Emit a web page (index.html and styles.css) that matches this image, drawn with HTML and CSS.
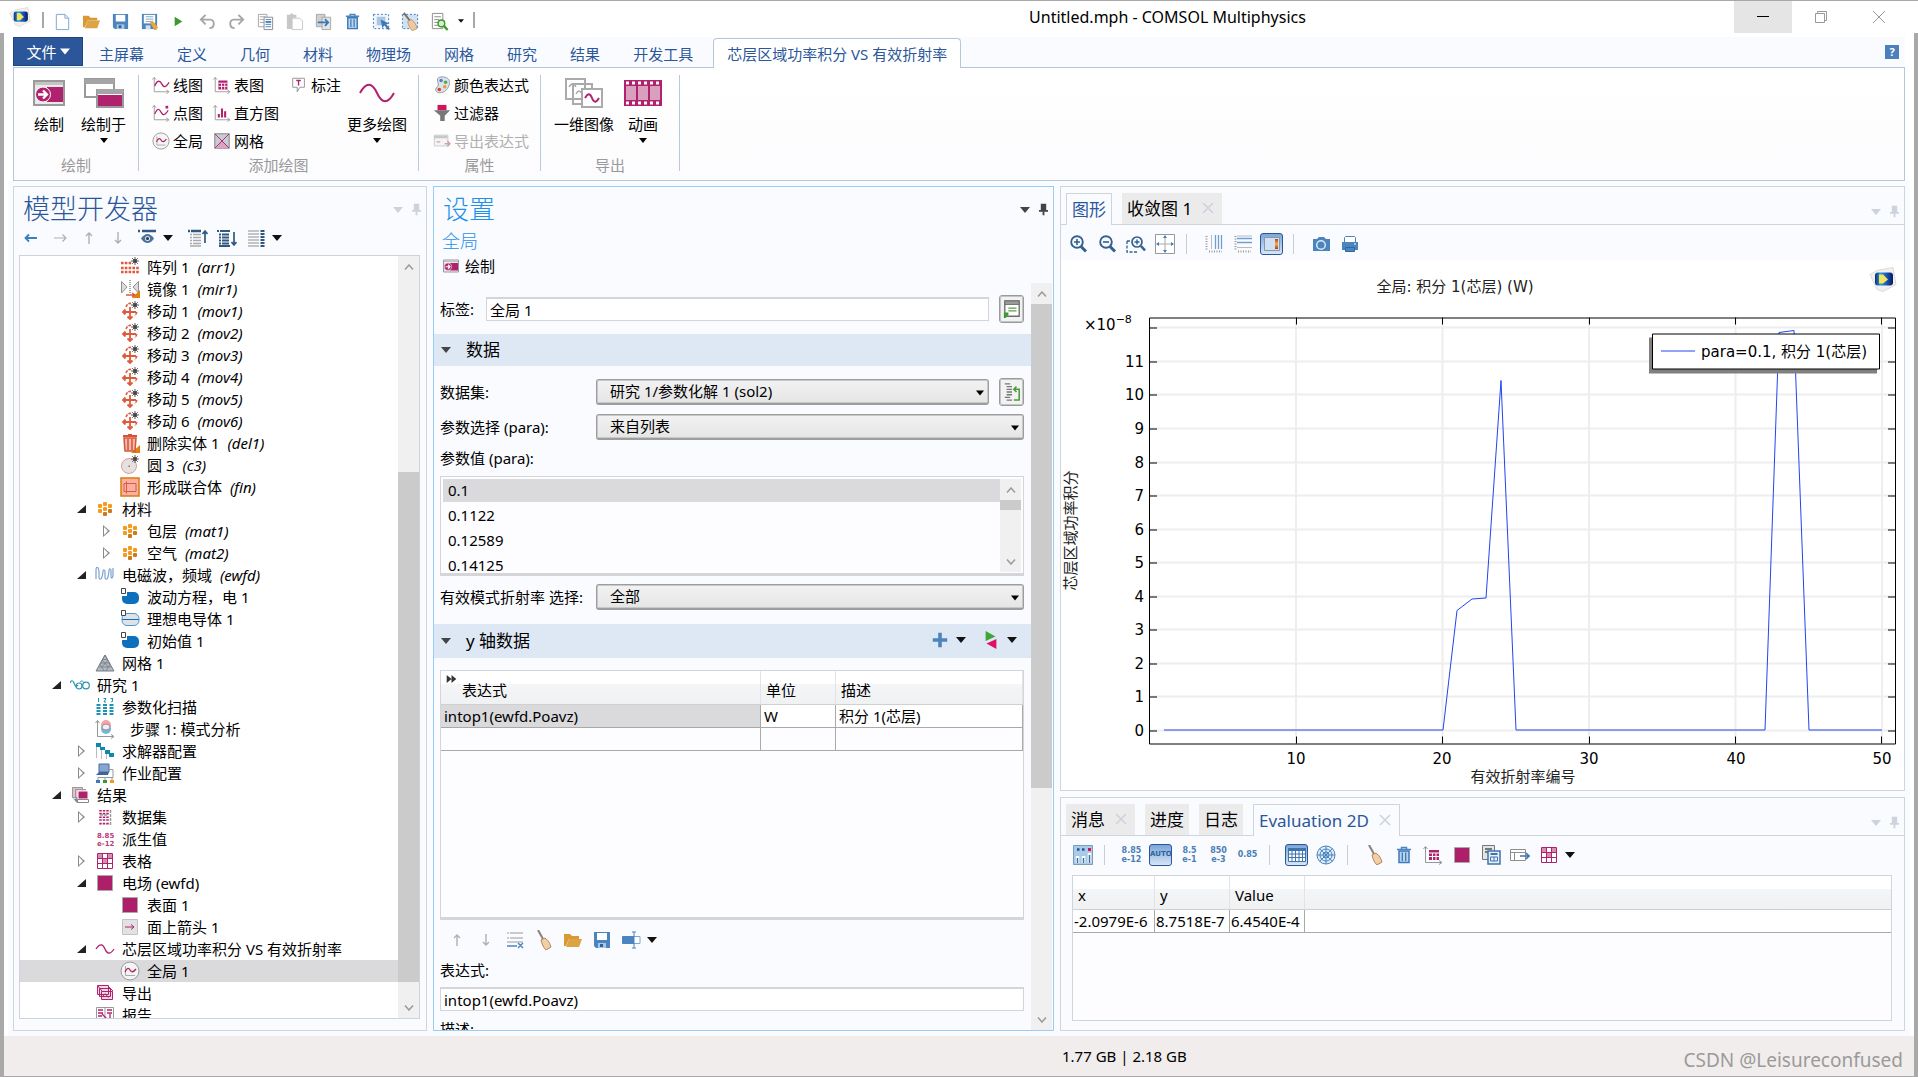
FILE: index.html
```html
<!DOCTYPE html>
<html lang="zh-CN">
<head>
<meta charset="utf-8">
<title>Untitled.mph - COMSOL Multiphysics</title>
<link rel="stylesheet" href="styles.css">
</head>
<body>
<svg class="defs" aria-hidden="true">
  <defs>
    <linearGradient id="logoFill" x1="0" y1="0" x2="1" y2="0"><stop offset="0" stop-color="#0a2a7a"/><stop offset=".3" stop-color="#2a9be0"/><stop offset=".6" stop-color="#1d5fc4"/><stop offset="1" stop-color="#061a60"/></linearGradient>
    <linearGradient id="rainbow" x1="0" y1="0" x2="0" y2="1"><stop offset="0" stop-color="#c33"/><stop offset=".5" stop-color="#f5b63c"/><stop offset="1" stop-color="#a33"/></linearGradient>
    <symbol id="logo" viewBox="0 0 28 26"><path d="M1 8 8 4 24 1l3 17-13 7-6-2z" fill="#f1f0ee" stroke="#dcdad8"/><rect x="6" y="6" width="18" height="13" rx="3" fill="url(#logoFill)"/><path d="M10 8h4l5 5-5 4-4 0z" fill="#f3e45a"/></symbol>
    <symbol id="caret" viewBox="0 0 10 6"><path d="M0 0h10L5 6z" fill="currentColor"/></symbol>
    <symbol id="pin" viewBox="0 0 10 13"><path d="M2 0h6v7h2v2H6v4H4V9H0V7h2z" fill="currentColor"/></symbol>
    <symbol id="chev-up" viewBox="0 0 10 6"><path d="M1 5.500 5 1l4 4.500" fill="none" stroke="#9a9a9a" stroke-width="1.500"/></symbol>
    <symbol id="chev-down" viewBox="0 0 10 6"><path d="M1 .5 5 5 9 .5" fill="none" stroke="#9a9a9a" stroke-width="1.500"/></symbol>
    <symbol id="x" viewBox="0 0 12 12"><path d="M1 1l10 10M11 1 1 11" stroke="currentColor" stroke-width="1.500" fill="none"/></symbol>
    <symbol id="new" viewBox="0 0 20 20"><path d="M3.500 2.500h9l4 4v12h-13z" fill="#fff" stroke="#7ba7d3"/><path d="M12.500 2.500v4h4" fill="none" stroke="#7ba7d3"/></symbol>
    <symbol id="open" viewBox="0 0 20 20"><path d="M1 4h6l2 2h7v3H6L3 16H1z" fill="#d99a35"/><path d="M6 9h13l-3 8H3z" fill="#dca445"/></symbol>
    <symbol id="save" viewBox="0 0 20 20"><path d="M2 2h16v16H4l-2-2z" fill="#4c84be"/><path d="M5 3h10v7H5z" fill="#fff"/><path d="M6 13h8v5H6z" fill="#a8c6e6"/><path d="M8 14h3v3H8z" fill="#2d629d"/></symbol>
    <symbol id="saveas" viewBox="0 0 20 20"><path d="M2 2h16v16H2z" fill="#4c84be"/><path d="M4 3h12v9H4z" fill="#fff"/><path d="M6 5h8M6 7.500h8M6 10h6" stroke="#7ba7d3"/><path d="M6 14h5v4H6z" fill="#cfe0f2"/><path d="m10 10 3-1 6 7-2 3-2 0z" fill="#e6a73c"/></symbol>
    <symbol id="run" viewBox="0 0 20 20"><path d="m6 5 8 5-8 5z" fill="#3b9a2c"/></symbol>
    <symbol id="undo" viewBox="0 0 20 20"><path d="M4 8h9c5 0 5 9-1 9M8 3 3 8l5 5" fill="none" stroke="#a6a6a6" stroke-width="2"/></symbol>
    <symbol id="redo" viewBox="0 0 20 20"><path d="M16 8H7c-5 0-5 9 1 9M12 3l5 5-5 5" fill="none" stroke="#a6a6a6" stroke-width="2"/></symbol>
    <symbol id="copy" viewBox="0 0 20 20"><path d="M2.500 2.500h9v13h-9z" fill="#fff" stroke="#a6a6a6"/><path d="M4 5h6M4 8h6M4 11h6" stroke="#a6a6a6"/><path d="M8.500 5.500h9v13h-9z" fill="#fff" stroke="#8b8b8b"/><path d="M10 8h6M10 13h6M10 15.500h6" stroke="#4c84be"/><path d="M10 9.500h6v2h-6z" fill="#4c84be"/></symbol>
    <symbol id="paste" viewBox="0 0 20 20"><path d="M2 3h3l2-2 2 2h3v3H8v12H2z" fill="#c7c7c7"/><path d="M7.500 6.500h8l3 3v9h-11z" fill="#fff" stroke="#c7c7c7"/></symbol>
    <symbol id="dup" viewBox="0 0 20 20"><path d="M2.500 2.500h9v13h-9z" fill="#d0d0d0" stroke="#a6a6a6"/><path d="M8.500 5.500h9v13h-9z" fill="#e4e4e4" stroke="#a6a6a6"/><path d="M4 11h11M11.500 7.500 15 11l-3.500 3.500" fill="none" stroke="#3676b8" stroke-width="1.800"/></symbol>
    <symbol id="trash" viewBox="0 0 20 20"><path d="M3 4.500h14M7.500 4V2.500h5V4" fill="none" stroke="#4c84be" stroke-width="1.500"/><path d="M5 6h10v11.500H5z" fill="#b9d4ef" stroke="#3e79b6" stroke-width="1.500"/><path d="M8.300 7.500V16M11.700 7.500V16" stroke="#3e79b6" stroke-width="1.300"/></symbol>
    <symbol id="selbox" viewBox="0 0 20 20"><path d="M1.500 2.500h16v15h-16z" fill="#eef5fc" stroke="#3e79b6" stroke-dasharray="2 2"/><path d="M5 5h9v9H5z" fill="#a9c7e5"/><path d="m9 8 9 4-3 1 4 5-2 1-4-5-2 3z" fill="#3e79b6"/></symbol>
    <symbol id="selclear" viewBox="0 0 20 20"><path d="M1.500 2.500h16v15h-16z" fill="#cfe1f3" stroke="#3e79b6" stroke-dasharray="2 2"/><path d="m3 1 7 9" stroke="#7c6e63" stroke-width="2"/><path d="m7 10 4-2c4 3 5 6 6 9l-5 3c-3-3-4-6-5-10z" fill="#ecc9a0" stroke="#b28456" stroke-width=".7"/></symbol>
    <symbol id="find" viewBox="0 0 20 20"><path d="M2.500 1.500h11v16h-11z" fill="#fff" stroke="#8b8b8b"/><path d="M4.500 5h7M4.500 8h5M4.500 11h4M4.500 14h4" stroke="#8b8b8b"/><circle cx="12" cy="12" r="3.500" fill="#d3edcd" stroke="#3b9a2c" stroke-width="1.500"/><path d="m14.500 14.500 4 4.500" stroke="#3b9a2c" stroke-width="2.500"/></symbol>
    <symbol id="left" viewBox="0 0 20 20"><path d="M4 10h12M8 6.500 4.500 10 8 13.500" fill="none" stroke="currentColor" stroke-width="1.800"/></symbol>
    <symbol id="right" viewBox="0 0 20 20"><path d="M4 10h12M12.500 6.500 16 10l-3.500 3.500" fill="none" stroke="currentColor" stroke-width="1.200"/></symbol>
    <symbol id="up" viewBox="0 0 20 20"><path d="M10 16V5M7 8l3-3 3 3" fill="none" stroke="currentColor" stroke-width="1.400"/></symbol>
    <symbol id="down" viewBox="0 0 20 20"><path d="M10 4v11M7 12l3 3 3-3" fill="none" stroke="currentColor" stroke-width="1.400"/></symbol>
    <symbol id="eye" viewBox="0 0 20 20"><path d="M1 3h2M5 3h14" stroke="#33587f" stroke-width="2.500"/><path d="M4 10.500c4-6 9-6 13 0-4 6-9 6-13 0z" fill="#4b719c"/><circle cx="10.500" cy="10.500" r="2.500" fill="#dfe8f2"/><circle cx="10.500" cy="10.500" r="1.500" fill="#234"/></symbol>
    <symbol id="collapse" viewBox="0 0 20 20"><path d="M0 3h2M3 3h10" stroke="#33587f" stroke-width="2.500"/><path d="M2 6.500h2m1 0h8M2 9.500h2m1 0h8M2 12.500h2m1 0h8M2 15.500h2m1 0h8M2 18h11" stroke="#aaa" stroke-width="1.300"/><path d="M17 15V3m-2.500 3L17 3l2.500 3" fill="none" stroke="#33587f" stroke-width="1.700"/></symbol>
    <symbol id="expand" viewBox="0 0 20 20"><path d="M0 3h2M3 3h10M2 6.500h2m1 0h7M2 9.500h2m1 0h7M2 12.500h2m1 0h7M2 15.500h2m1 0h7M2 18h11" stroke="#33587f" stroke-width="2"/><path d="M17 4v13m-2.500-3L17 17l2.500-3" fill="none" stroke="#33587f" stroke-width="1.700"/></symbol>
    <symbol id="columns" viewBox="0 0 20 20"><path d="M2 3h11M2 6h11M2 9h11M2 12h11M2 15h11M2 18h11" stroke="#b4b4b4" stroke-width="1.600"/><path d="M14.500 3h4M14.500 6h4M14.500 9h4M14.500 12h4M14.500 15h4M14.500 18h4" stroke="#33587f" stroke-width="2"/></symbol>
    <symbol id="plotwin" viewBox="0 0 32 26"><path d="M1 1h30v24H1z" fill="#e9e9e9" stroke="#9a9a9a" stroke-width="2"/><path d="M2 2h28v3H2z" fill="#c4c4c4"/><path d="M14 7h16v15H14z" fill="#b0226d"/><circle cx="10" cy="14.500" r="7.500" fill="#b0226d" stroke="#fff"/><path d="M5 14.500h8m-3-4 4 4-4 4" fill="none" stroke="#fff" stroke-width="2.300"/></symbol>
    <symbol id="plotin" viewBox="0 0 40 30"><path d="M1 1h29v18H1z" fill="#fff" stroke="#9a9a9a" stroke-width="2"/><path d="M1 1h29v5H1z" fill="#a5a5a5"/><path d="M13 12h26v17H13z" fill="#b0226d" stroke="#9a9a9a" stroke-width="2"/><path d="M13 11h26v5H13z" fill="#a5a5a5"/><path d="M14 16.500h24" stroke="#fff"/></symbol>
    <symbol id="line" viewBox="0 0 20 20"><path d="M2.500 2v15.500H18M.5 4l2-2.500 2 2.500M16 15.500l3 2-3 2" fill="none" stroke="#979797"/><path d="M3 11c3-7 6-6 8-2s4 4 8-2" fill="none" stroke="#b0226d" stroke-width="1.500"/></symbol>
    <symbol id="point" viewBox="0 0 20 20"><path d="M2.500 2v15.500H18M.5 4l2-2.500 2 2.500M16 15.500l3 2-3 2" fill="none" stroke="#979797"/><path d="M3 11c3-7 5-6 7-2s4 4 8-2" fill="none" stroke="#b0226d" stroke-width="1.400"/><path d="M15 2h3v3h-3z" fill="#b0226d"/></symbol>
    <symbol id="global" viewBox="0 0 20 20"><circle cx="10" cy="10" r="9" fill="#f4f4f4" stroke="#999"/><path d="M5.500 5v9.500H15" fill="none" stroke="#aaa"/><path d="M5 11c2-5 4-4 5-2s3 3 6-1" fill="none" stroke="#b0226d" stroke-width="1.300"/></symbol>
    <symbol id="tableplot" viewBox="0 0 20 20"><path d="M2.500 2v15.500H18M.5 4l2-2.500 2 2.500M16 15.500l3 2-3 2" fill="none" stroke="#979797"/><path d="M6 5h10v10H6z" fill="#b0226d"/><path d="M6 8h10M6 11.500h10M9.500 8v7M13 8v7" stroke="#fff"/></symbol>
    <symbol id="hist" viewBox="0 0 20 20"><path d="M2.500 2v15.500H18M.5 4l2-2.500 2 2.500M16 15.500l3 2-3 2" fill="none" stroke="#979797"/><path d="M6.500 15v-4M10 15V5M13.500 15V8" stroke="#b0226d" stroke-width="2.300"/></symbol>
    <symbol id="meshplot" viewBox="0 0 20 20"><path d="M2 2h16v16H2z" fill="#c8ccd3" stroke="#777"/><path d="m2 18 8-9 8 9z" fill="#d8a4bf"/><path d="M2 2l16 16M18 2 2 18" stroke="#b0226d"/></symbol>
    <symbol id="annot" viewBox="0 0 20 20"><path d="M3 2.500h13v10h-5l-3 5v-5H3z" fill="#fff" stroke="#8f8f8f"/><path d="M7 5h5M9.500 5v5.500" stroke="#b0226d" stroke-width="1.500"/></symbol>
    <symbol id="wave" viewBox="0 0 36 20"><path d="M1 10C7-1 13-1 18 10s11 11 17 0" fill="none" stroke="#b0226d" stroke-width="2"/></symbol>
    <symbol id="palette" viewBox="0 0 20 20"><path d="M10 1c11 0 9 9 6 13-4 6-13 6-13 1 0-3 3-2 3-5S2 1 10 1z" fill="#dbe3ec" stroke="#8a9099"/><circle cx="9" cy="5" r="2" fill="#4c84be"/><circle cx="14" cy="7" r="2" fill="#5aa84a"/><circle cx="13" cy="12" r="2" fill="#f0a030"/><circle cx="7" cy="15" r="2" fill="#d04040"/></symbol>
    <symbol id="filter" viewBox="0 0 20 20"><path d="M5 1h10v6H5z" fill="#d11460"/><path d="M1 7h18l-6 6v6H8v-6z" fill="#777"/></symbol>
    <symbol id="exportx" viewBox="0 0 20 20"><path d="M1.500 3.500h15v12h-15z" fill="#f4f4f4" stroke="#c8c8c8"/><path d="M1 4h15v3H1z" fill="#c8c8c8"/><path d="M4 11h4M13 13h6M16 10l3 3-3 3" stroke="#cf9db7" fill="none" stroke-width="1.500"/></symbol>
    <symbol id="image1d" viewBox="0 0 38 30"><path d="M1 1h19v20H1zM8 6h19v20H8z" fill="#fff" stroke="#aaa" stroke-width="2"/><path d="M4 9c2-4 5-4 7 0M11 16c2-4 4-4 6 0" fill="none" stroke="#aaa" stroke-width="1.500"/><path d="M17 11h20v18H17z" fill="#fff" stroke="#aaa" stroke-width="2"/><path d="M20 20c3-5 5-5 7 0s4 5 7 0" fill="none" stroke="#b0226d" stroke-width="2"/></symbol>
    <symbol id="film" viewBox="0 0 38 26"><path d="M0 0h38v26H0z" fill="#b0226d"/><path d="M2 6h10v14H2zM14 6h10v14H14zM26 6h10v14H26z" fill="#d8a0bd"/><path d="M2 3h34M2 23h34" stroke="#fff" stroke-width="3" stroke-dasharray="3 3"/></symbol>
    <symbol id="star" viewBox="0 0 10 10"><path d="M5 0v10M0 5h10M1.500 1.500l7 7M8.500 1.500l-7 7" stroke="#555" stroke-width="1.200"/><circle cx="5" cy="5" r="2.400" fill="#444"/></symbol>
    <symbol id="array" viewBox="0 0 20 20"><path d="M1 6h11M1 11h18M1 15h18" stroke="#dd5a3c" stroke-width="2.600" stroke-dasharray="2.600 1.200"/><use href="#star" x="11" y="0" width="8" height="8"/></symbol>
    <symbol id="mirror" viewBox="0 0 20 20"><path d="M1.500 2.500 7 8l-5.500 6zM18.500 2.500 13 8l5.500 6z" fill="#ddd" stroke="#8f8f8f"/><path d="M10 1v14" stroke="#555" stroke-dasharray="1 1"/><path d="M20 11v8h-8z" fill="#e08010"/><path d="M6 16h9m-3-2 3 2-3 2" fill="none" stroke="#dd5a3c" stroke-width="1.300"/></symbol>
    <symbol id="move" viewBox="0 0 20 20"><path d="M10 6v12M4 11h12M7.500 15.500 10 18l2.500-2.500M5.500 8.500 3 11l2.500 2.500" fill="none" stroke="#dd5a3c" stroke-width="1.800"/><path d="M6 6c1-3 3-4 5-3.500M17 11l-2 4" fill="none" stroke="#dd5a3c" stroke-width="1.500" stroke-dasharray="3 1"/><use href="#star" x="11" y="0" width="8" height="8"/></symbol>
    <symbol id="delent" viewBox="0 0 20 20"><path d="M20 12v8h-9z" fill="#e08010"/><path d="M3 3h14M8 2h4" stroke="#d4553a" stroke-width="1.800"/><path d="M4 5h12l-1 13H5z" fill="#f6b9ab" stroke="#d4553a" stroke-width="1.500"/><path d="M8 6v11M12 6v11" stroke="#d4553a" stroke-width="1.500"/></symbol>
    <symbol id="circ" viewBox="0 0 20 20"><circle cx="9" cy="11" r="7.500" fill="#e2e2e2" stroke="#e59c8c"/><path d="M8.500 10.500h1.500v1.500H8.500z" fill="#d4553a"/><use href="#star" x="11" y="0" width="8" height="8"/></symbol>
    <symbol id="union" viewBox="0 0 20 20"><path d="M1 1h18v18H1z" fill="#f7b0a2" stroke="#dc7b0c" stroke-width="1.500"/><path d="M4 6.500h12v8H4zM6.500 4.500v12" fill="none" stroke="#dd5a3c"/></symbol>
    <symbol id="mat" viewBox="0 0 20 20"><g fill="#f59a1e"><rect x="8" y="3" width="4" height="4" rx="1"/><rect x="8" y="8" width="4" height="4" rx="1"/><rect x="8" y="13" width="4" height="4" rx="1" fill="#cd7a18"/><rect x="3" y="5" width="4" height="4" rx="1"/><rect x="3" y="10" width="4" height="4" rx="1"/><rect x="13" y="5" width="4" height="4" rx="1"/><rect x="13" y="10" width="4" height="4" rx="1" fill="#cd7a18"/></g></symbol>
    <symbol id="emw" viewBox="0 0 20 20"><path d="M1 14V6c0-5 2-5 3 0v6c0 3 2 3 3 0l1-5c0-3 2-3 2 0v5c0 3 2 3 3 0l1-6c0-3 2-3 2 0v5c0 3 1 3 2 0V3" fill="none" stroke="#7aa2cd" stroke-width="1.200"/></symbol>
    <symbol id="dom" viewBox="0 0 20 20"><rect x="2" y="5" width="17" height="12" rx="5" fill="#0d70bd"/><path d="M1 4h6v5H1z" fill="#fff"/><path d="M1.500 1.500h4v5h-4z" fill="#fff" stroke="#444"/></symbol>
    <symbol id="pec" viewBox="0 0 20 20"><rect x="2" y="4.500" width="17" height="12" rx="5" fill="#dfe3e8" stroke="#4d97d0"/><path d="M2 10.500h17" stroke="#0d70bd"/><path d="M1.500 1.500h4v5h-4z" fill="#fff" stroke="#444"/></symbol>
    <symbol id="mesh" viewBox="0 0 20 20"><path d="M10 2 1 18h18z" fill="#b5bac1" stroke="#777d85"/><path d="M7.500 6.500h5M5.500 10h9M3.500 14h13M10 2l5 9-4 7M10 2 5 11l4 7M7 7l6 7M13 7l-6 7" fill="none" stroke="#777d85" stroke-width=".8"/></symbol>
    <symbol id="study" viewBox="0 0 20 20"><path d="M0 8c1-3 3-3 4 0s2 4 4 2" fill="none" stroke="#2a93ad" stroke-width="1.200"/><circle cx="9" cy="11" r="3" fill="none" stroke="#2a93ad" stroke-width="1.200"/><circle cx="16" cy="10.500" r="3.300" fill="none" stroke="#2a93ad" stroke-width="1.200"/><path d="M10 7c2-2 3-1 4 1" fill="none" stroke="#2a93ad"/></symbol>
    <symbol id="sweep" viewBox="0 0 20 20"><path d="M3.500 7v12M10 7v12M16.500 7v12" stroke="#1d93b5" stroke-width="4" stroke-dasharray="2 1"/><path d="M3.500 1v4M8.500 1.500h2.500L9 5h2M15.500 1.500H18l-1 1.500 1 1-2 1" fill="none" stroke="#1d93b5"/></symbol>
    <symbol id="mode" viewBox="0 0 20 20"><path d="M2.500 2v15.500H18M.5 4l2-2.500 2 2.500M16 15.500l3 2-3 2" fill="none" stroke="#979797"/><circle cx="11" cy="6" r="5" fill="#f2a5a5"/><circle cx="11" cy="10" r="5" fill="#6fb8dd"/><ellipse cx="11" cy="8" rx="4" ry="3" fill="#eef" stroke="#a88"/></symbol>
    <symbol id="solver" viewBox="0 0 20 20"><path d="M1.500 3v14M6.500 8v10M11.500 11v7" stroke="#bbb"/><path d="M1 2h5v4H1zM5 6h5v3H5zM10 9h5v4h-5zM14 12h5v4h-5z" fill="#1088ad"/></symbol>
    <symbol id="job" viewBox="0 0 20 20"><path d="M4 1h10v8H4z" fill="#8aa5cd" stroke="#4a6da5"/><path d="m1 12 3-3h10l-1 3z" fill="#3f659e"/><path d="M14 6.500h4v8H3v3M10 14v3M17 14v3" fill="none" stroke="#999"/><path d="M1 17h4v3H1z" fill="#3b78bd"/><path d="M8 17h4v3H8z" fill="#3b9a2c"/><path d="M15 17h4v3h-4z" fill="#f59a1e"/></symbol>
    <symbol id="results" viewBox="0 0 20 20"><path d="M2.500 2.500h10v10h-10zM5.500 4.500h10v9h-10z" fill="#e6bcd1" stroke="#999"/><path d="M8 6h10v8H8z" fill="#b0226d" stroke="#fff"/><path d="M0 10l4 4h14v4H7z" fill="#888"/><path d="M7.500 14.500h11v3h-11z" fill="#fff" stroke="#888"/></symbol>
    <symbol id="dataset" viewBox="0 0 20 20"><path d="M5.500 3v15M9 3v15M12.500 3v15" stroke="#b0226d" stroke-width="2.500" stroke-dasharray="1.600 1.200 1.600 2"/><path d="M15.500 3v15M5 8h8" stroke="#999" stroke-width="1.500" stroke-dasharray="3 1"/></symbol>
    <symbol id="grid" viewBox="0 0 20 20"><path d="M2.500 2.500h15v15h-15z" fill="#fff" stroke="#b0226d"/><path d="M3 3h5v5H3zM8 8h5v5H8zM13 3h4v5h-4z" fill="#d58fb1"/><path d="M2.500 7.500h15M2.500 12.500h15M7.500 2.500v15M12.500 2.500v15" stroke="#b0226d"/></symbol>
    <symbol id="square" viewBox="0 0 20 20"><path d="M2.500 2.500h15v15h-15z" fill="#ad2069" stroke="#a9a9a9"/></symbol>
    <symbol id="arrowsurf" viewBox="0 0 20 20"><path d="M2.500 2.500h15v15h-15z" fill="#e2e2e2" stroke="#c3c3c3"/><path d="M5 10h9m-3-2.500 3 2.500-3 2.500" fill="none" stroke="#b0226d"/></symbol>
    <symbol id="wave1" viewBox="0 0 20 20"><path d="M1 10c4-6 7-5 9 0s5 6 9 0" fill="none" stroke="#b0226d" stroke-width="1.300"/></symbol>
    <symbol id="export" viewBox="0 0 20 20"><path d="M2.500 2.500h11v9h-11zM4.500 5.500h11v8h-11zM6.500 8.500h11v8h-11z" fill="#f3d9e6" stroke="#b0226d"/><path d="M3 3l4 5M13 3l5 5M8 13c2-3 3-2 4 0s2 1 4-1" fill="none" stroke="#b0226d"/></symbol>
    <symbol id="report" viewBox="0 0 20 20"><path d="M1.500 2.500h17v17h-17zM10 2.500v17" fill="#fff" stroke="#999"/><path d="M3 5h5M3 8h5M3 11h4M12 5h5M12 8h5M7 9l6 6M15 9v8" stroke="#b0226d" stroke-width="1.300"/></symbol>
    <symbol id="derived" viewBox="0 0 20 20"><g fill="#bb3c7c" font-family="DejaVu Sans" font-weight="700" font-size="7"><text x="2" y="9">8.85</text><text x="2" y="17">e-12</text></g></symbol>
    <symbol id="showhelp" viewBox="0 0 20 22"><path d="M2 2h16v17H2z" fill="#fff" stroke="#6d6d6d" stroke-width="1.500"/><path d="M2 2h16v4H2z" fill="#999" stroke="#6d6d6d"/><path d="M6 10h9M6 13h9" stroke="#55a046" stroke-width="1.500"/><path d="M1 21v-6h5v2l-3 4z" fill="#3b9a2c"/></symbol>
    <symbol id="goto" viewBox="0 0 20 22"><path d="M2 2h6M4 5h6M4 8h6M4 11h6M4 14h6M2 17h6M4 20h6" stroke="#777" stroke-width="1.500"/><path d="M12 20h6V8h-6m3-3-3 3 3 3" fill="none" stroke="#4a9a3c" stroke-width="1.700"/></symbol>
    <symbol id="plus" viewBox="0 0 20 20"><path d="M10 2v16M2 10h16" stroke="#4c84be" stroke-width="4"/></symbol>
    <symbol id="swap" viewBox="0 0 20 20"><path d="M4 0l11 6-11 5z" fill="#3fa535"/><path d="M16 9v11L5 14z" fill="#e0106a"/></symbol>
    <symbol id="ff" viewBox="0 0 12 10"><path d="m0 0 6 5-6 5zM6 0l6 5-6 5z" fill="#333"/></symbol>
    <symbol id="rows-x" viewBox="0 0 20 20"><path d="M2 3h2m1 0h13M2 8h2m1 0h13M2 12h16" stroke="#9a9a9a" stroke-width="1.200"/><path d="M2 16h10M13 13l5 5M18 13l-5 5" stroke="#4c84be" stroke-width="1.400"/></symbol>
    <symbol id="broom" viewBox="0 0 20 20"><path d="m4 0 5 9" stroke="#8a8078" stroke-width="2"/><path d="m7 10 4-2c4 3 5 6 6 9l-5 3c-3-3-4-6-5-10z" fill="#f1cfa6" stroke="#b28456"/></symbol>
    <symbol id="edit" viewBox="0 0 20 20"><path d="M1.500 6.500h13v7h-13z" fill="#4c84be" stroke="#4c84be"/><path d="M13 6.500h6v7h-6" fill="#fff" stroke="#7ba7d3"/><path d="M11 2h4M11 18h4M13 2v16" stroke="#4c84be"/></symbol>
    <symbol id="zoomin" viewBox="0 0 20 20"><circle cx="9" cy="8" r="5.800" fill="#f6f9fd" stroke="#345f8e" stroke-width="1.900"/><path d="m13 12.500 5 5" stroke="#345f8e" stroke-width="3"/><path d="M6 8h6M9 5v6" stroke="#345f8e" stroke-width="1.600"/></symbol>
    <symbol id="zoomout" viewBox="0 0 20 20"><circle cx="9" cy="8" r="5.800" fill="#f6f9fd" stroke="#345f8e" stroke-width="1.900"/><path d="m13 12.500 5 5" stroke="#345f8e" stroke-width="3"/><path d="M6 8h6" stroke="#345f8e" stroke-width="1.600"/></symbol>
    <symbol id="zoombox" viewBox="0 0 20 20"><path d="M1 7v11h10M1 7h4" fill="none" stroke="#345f8e" stroke-width="1.300" stroke-dasharray="3 1.500"/><circle cx="11" cy="8" r="5" fill="#f6f9fd" stroke="#345f8e" stroke-width="1.700"/><path d="m15 12 4 4.500" stroke="#345f8e" stroke-width="2.600"/><path d="M8.500 8h5M11 5.500v5" stroke="#345f8e" stroke-width="1.400"/></symbol>
    <symbol id="extents" viewBox="0 0 20 20"><path d="M.5.5h19v19H.5z" fill="#fff" stroke="#999"/><path d="M10 2v16M2 10h16" stroke="#aaa"/><path d="m8 4 2-3 2 3zM8 16l2 3 2-3zM4 8l-3 2 3 2zM16 8l3 2-3 2z" fill="#3c7fc0"/></symbol>
    <symbol id="xlog" viewBox="0 0 20 20"><path d="M2.500 2v14M5 17.500h13" stroke="#999" stroke-width="2" stroke-dasharray="1 1.500" fill="none"/><path d="M7.500 1v14" stroke="#bbb"/><path d="M11.500 1v14M14.500 1v14M17.500 1v14" stroke="#6f9fd0" stroke-width="1.300"/></symbol>
    <symbol id="ylog" viewBox="0 0 20 20"><path d="M2.500 2v14M5 17.500h13" stroke="#999" stroke-width="2" stroke-dasharray="1 1.500" fill="none"/><path d="M4 2h15M4 13.500h15" stroke="#bbb"/><path d="M4 4.500h15M4 8.500h15" stroke="#6f9fd0" stroke-width="1.500"/></symbol>
    <symbol id="legend" viewBox="0 0 20 20"><path d="M2.500 3.500h15v13h-15z" fill="#cfe1f5" stroke="#8c97a5"/><path d="M13 5h3v10h-3z" fill="url(#rainbow)"/></symbol>
    <symbol id="camera" viewBox="0 0 20 20"><path d="M2 5h4l2-2h5l2 2h4v12H2z" fill="#4c84be"/><circle cx="10" cy="11" r="4.300" fill="#4c84be" stroke="#dbe8f5" stroke-width="1.500"/></symbol>
    <symbol id="print" viewBox="0 0 20 20"><path d="M5.500 2.500h9l1 1v5h-11v-5z" fill="#fff" stroke="#4c84be"/><path d="M2 8h16v8H2z" fill="#4c84be"/><path d="M5.500 13.500h9v4h-9z" fill="#4c84be" stroke="#2f67a2"/><path d="M14 10h2" stroke="#fff"/></symbol>
    <symbol id="panel" viewBox="0 0 20 20"><path d="M.5.5h19v19H.5z" fill="#a9cbe9" stroke="#7c9cbc"/><path d="M4 4.500h2.500M9 4.500h2.500" stroke="#22568f" stroke-width="2.500"/><path d="M15 3h3v3h-3z" fill="#d11460"/><path d="M4.500 11v7M10.500 11v7M16.500 8v10" stroke="#fff" stroke-width="3.500"/><path d="M4.500 13v5M10.500 13v5M16.500 10v8" stroke="#3f6f9f" stroke-width="1.500"/></symbol>
    <symbol id="gridfull" viewBox="0 0 20 20"><path d="M1.500 3.500h17v13h-17z" fill="#fff" stroke="#3f74ad"/><path d="M1 3h18v3H1z" fill="#3f74ad"/><path d="M1 9h18M1 12.500h18M5 6v11M8.500 6v11M12 6v11M15.500 6v11" stroke="#3f74ad"/></symbol>
    <symbol id="polar" viewBox="0 0 20 20"><circle cx="10" cy="10" r="9" fill="#dcebfa" stroke="#4c84be"/><circle cx="10" cy="10" r="6" fill="none" stroke="#4c84be"/><circle cx="10" cy="10" r="3" fill="none" stroke="#4c84be"/><path d="M10 1v18M1 10h18M3.500 3.500l13 13M16.500 3.500l-13 13" stroke="#4c84be"/></symbol>
    <symbol id="copytab" viewBox="0 0 20 20"><path d="M1.500.5h12v14h-12z" fill="#e3e3e3" stroke="#777"/><path d="M4 4h7M4 7h7" stroke="#555" stroke-width="1.500"/><path d="M7 6h12v13H7z" fill="#e6f0fa" stroke="#3f74ad" stroke-width="1.500"/><path d="M9.500 9h7" stroke="#3f74ad" stroke-width="2"/><path d="M9.500 12h7v4h-7zM13 12v4" fill="none" stroke="#3f74ad"/></symbol>
    <symbol id="exporttab" viewBox="0 0 20 20"><path d="M.5 4.500h15v11H.5zM.5 7.500h15M4.500 7v8" fill="#fff" stroke="#8f8f8f"/><path d="M10 11h9m-3-3 3 3-3 3" fill="none" stroke="#3f74ad" stroke-width="1.600"/></symbol>
  </defs>
</svg>

<header class="titlebar">
  <svg class="app-logo"><use href="#logo"/></svg>
  <span class="vline"></span>
  <nav class="quick" aria-label="快速访问">
    <button class="tool" title="新建"><svg><use href="#new"/></svg></button>
    <button class="tool" title="打开"><svg><use href="#open"/></svg></button>
    <button class="tool" title="保存"><svg><use href="#save"/></svg></button>
    <button class="tool" title="另存为"><svg><use href="#saveas"/></svg></button>
    <button class="tool" title="运行"><svg><use href="#run"/></svg></button>
    <button class="tool" title="撤消"><svg><use href="#undo"/></svg></button>
    <button class="tool" title="重做"><svg><use href="#redo"/></svg></button>
    <button class="tool" title="复制"><svg><use href="#copy"/></svg></button>
    <button class="tool" title="粘贴"><svg><use href="#paste"/></svg></button>
    <button class="tool" title="生成副本"><svg><use href="#dup"/></svg></button>
    <button class="tool" title="删除"><svg><use href="#trash"/></svg></button>
    <button class="tool" title="选择"><svg><use href="#selbox"/></svg></button>
    <button class="tool" title="清除选择"><svg><use href="#selclear"/></svg></button>
    <button class="tool" title="查找"><svg><use href="#find"/></svg></button>
    <button class="drop drop-small" title="自定义"><svg><use href="#caret"/></svg></button>
  </nav>
  <span class="vline"></span>
  <h1 class="window-title">Untitled.mph - COMSOL Multiphysics</h1>
  <div class="window-buttons">
    <button class="winbtn winbtn-min" title="最小化"><svg viewBox="0 0 12 12"><path d="M0 5.500h12" stroke="#000" stroke-width="1"/></svg></button>
    <button class="winbtn" title="还原"><svg viewBox="0 0 12 12"><path d="M.5 2.500h9v9h-9zM2.500 2.500v-2h9v9h-2" fill="none" stroke="#999"/></svg></button>
    <button class="winbtn" title="关闭"><svg viewBox="0 0 12 12"><path d="m0 0 12 12M12 0 0 12" stroke="#999"/></svg></button>
  </div>
</header>

<div class="frame">
  <nav class="ribbon-tabs">
    <button class="file-btn">文件<svg><use href="#caret"/></svg></button>
    <div class="tabs-list">
      <button class="rtab">主屏幕</button><button class="rtab">定义</button><button class="rtab">几何</button><button class="rtab">材料</button><button class="rtab">物理场</button><button class="rtab">网格</button><button class="rtab">研究</button><button class="rtab">结果</button><button class="rtab">开发工具</button>
    </div>
    <button class="rtab rtab-active">芯层区域功率积分 VS 有效折射率</button>
    <button class="help">?</button>
  </nav>
  <section class="ribbon">
    <div class="group">
      <div class="group-body group-plot">
        <button class="big"><svg class="ic-plotwin"><use href="#plotwin"/></svg><span>绘制</span></button>
        <button class="big"><svg class="ic-plotin"><use href="#plotin"/></svg><span>绘制于</span><svg class="more"><use href="#caret"/></svg></button>
      </div>
      <div class="group-name">绘制</div>
    </div>
    <div class="group">
      <div class="group-body group-add">
        <div class="cmds">
          <button class="cmd"><svg><use href="#line"/></svg>线图</button>
          <button class="cmd"><svg><use href="#tableplot"/></svg>表图</button>
          <button class="cmd"><svg><use href="#annot"/></svg>标注</button>
          <button class="cmd"><svg><use href="#point"/></svg>点图</button>
          <button class="cmd cmd-wide"><svg><use href="#hist"/></svg>直方图</button>
          <button class="cmd"><svg><use href="#global"/></svg>全局</button>
          <button class="cmd"><svg><use href="#meshplot"/></svg>网格</button>
        </div>
        <button class="big"><svg class="ic-wave"><use href="#wave"/></svg><span>更多绘图</span><svg class="more"><use href="#caret"/></svg></button>
      </div>
      <div class="group-name">添加绘图</div>
    </div>
    <div class="group">
      <div class="group-body group-attr">
        <button class="cmd"><svg><use href="#palette"/></svg>颜色表达式</button>
        <button class="cmd"><svg><use href="#filter"/></svg>过滤器</button>
        <button class="cmd" disabled><svg><use href="#exportx"/></svg>导出表达式</button>
      </div>
      <div class="group-name">属性</div>
    </div>
    <div class="group">
      <div class="group-body group-export">
        <button class="big"><svg class="ic-image"><use href="#image1d"/></svg><span>一维图像</span></button>
        <button class="big"><svg class="ic-film"><use href="#film"/></svg><span>动画</span><svg class="more"><use href="#caret"/></svg></button>
      </div>
      <div class="group-name">导出</div>
    </div>
  </section>

  <main class="workspace">
    <section class="panel builder">
      <header class="panel-head">
        <h2>模型开发器</h2>
        <span class="panel-ctl"><svg class="ctl-caret"><use href="#caret"/></svg><svg class="ctl-pin"><use href="#pin"/></svg></span>
      </header>
      <div class="toolbar builder-tools">
        <button class="tool blue" title="后退"><svg><use href="#left"/></svg></button>
        <button class="tool dim" title="前进"><svg><use href="#right"/></svg></button>
        <button class="tool dim" title="上移"><svg><use href="#up"/></svg></button>
        <button class="tool dim" title="下移"><svg><use href="#down"/></svg></button>
        <button class="tool" title="显示"><svg><use href="#eye"/></svg></button>
        <button class="drop" title="显示选项"><svg><use href="#caret"/></svg></button>
        <button class="tool" title="全部折叠"><svg><use href="#collapse"/></svg></button>
        <button class="tool" title="全部展开"><svg><use href="#expand"/></svg></button>
        <button class="tool" title="节点文本"><svg><use href="#columns"/></svg></button>
        <button class="drop" title="节点文本选项"><svg><use href="#caret"/></svg></button>
      </div>
      <div class="tree-box">
        <ul class="tree">
          <li class="l3"><svg><use href="#array"/></svg>阵列 1 <i>(arr1)</i></li>
          <li class="l3"><svg><use href="#mirror"/></svg>镜像 1 <i>(mir1)</i></li>
          <li class="l3"><svg><use href="#move"/></svg>移动 1 <i>(mov1)</i></li>
          <li class="l3"><svg><use href="#move"/></svg>移动 2 <i>(mov2)</i></li>
          <li class="l3"><svg><use href="#move"/></svg>移动 3 <i>(mov3)</i></li>
          <li class="l3"><svg><use href="#move"/></svg>移动 4 <i>(mov4)</i></li>
          <li class="l3"><svg><use href="#move"/></svg>移动 5 <i>(mov5)</i></li>
          <li class="l3"><svg><use href="#move"/></svg>移动 6 <i>(mov6)</i></li>
          <li class="l3"><svg><use href="#delent"/></svg>删除实体 1 <i>(del1)</i></li>
          <li class="l3"><svg><use href="#circ"/></svg>圆 3 <i>(c3)</i></li>
          <li class="l3"><svg><use href="#union"/></svg>形成联合体 <i>(fin)</i></li>
          <li class="l2 open"><svg><use href="#mat"/></svg>材料</li>
          <li class="l3 closed"><svg><use href="#mat"/></svg>包层 <i>(mat1)</i></li>
          <li class="l3 closed"><svg><use href="#mat"/></svg>空气 <i>(mat2)</i></li>
          <li class="l2 open"><svg><use href="#emw"/></svg>电磁波，频域 <i>(ewfd)</i></li>
          <li class="l3"><svg><use href="#dom"/></svg>波动方程，电 1</li>
          <li class="l3"><svg><use href="#pec"/></svg>理想电导体 1</li>
          <li class="l3"><svg><use href="#dom"/></svg>初始值 1</li>
          <li class="l2"><svg><use href="#mesh"/></svg>网格 1</li>
          <li class="l1 open"><svg><use href="#study"/></svg>研究 1</li>
          <li class="l2"><svg><use href="#sweep"/></svg>参数化扫描</li>
          <li class="l2 step"><svg><use href="#mode"/></svg>步骤 1: 模式分析</li>
          <li class="l2 closed"><svg><use href="#solver"/></svg>求解器配置</li>
          <li class="l2 closed"><svg><use href="#job"/></svg>作业配置</li>
          <li class="l1 open"><svg><use href="#results"/></svg>结果</li>
          <li class="l2 closed"><svg><use href="#dataset"/></svg>数据集</li>
          <li class="l2"><svg><use href="#derived"/></svg>派生值</li>
          <li class="l2 closed"><svg><use href="#grid"/></svg>表格</li>
          <li class="l2 open"><svg><use href="#square"/></svg>电场 (ewfd)</li>
          <li class="l3"><svg><use href="#square"/></svg>表面 1</li>
          <li class="l3"><svg><use href="#arrowsurf"/></svg>面上箭头 1</li>
          <li class="l2 open"><svg><use href="#wave1"/></svg>芯层区域功率积分 VS 有效折射率</li>
          <li class="l3 selected"><svg><use href="#global"/></svg>全局 1</li>
          <li class="l2"><svg><use href="#export"/></svg>导出</li>
          <li class="l2"><svg><use href="#report"/></svg>报告</li>
        </ul>
        <div class="scroll tree-scroll"><svg><use href="#chev-up"/></svg><div class="track"><div class="thumb"></div></div><svg><use href="#chev-down"/></svg></div>
      </div>
    </section>

    <section class="panel settings">
      <header class="panel-head">
        <h2>设置</h2>
        <span class="panel-ctl"><svg class="ctl-caret"><use href="#caret"/></svg><svg class="ctl-pin"><use href="#pin"/></svg></span>
      </header>
      <h3 class="node-type">全局</h3>
      <button class="plot-cmd"><svg><use href="#plotwin"/></svg>绘制</button>
      <div class="settings-view">
        <form class="settings-form">
          <div class="row label-row">
            <label for="node-label">标签:</label>
            <input id="node-label" type="text" value="全局 1">
            <button type="button" class="side" title="显示"><svg><use href="#showhelp"/></svg></button>
          </div>
          <div class="section"><svg class="sec-caret"><use href="#caret"/></svg><h4>数据</h4></div>
          <div class="row first-row">
            <label for="dataset-sel">数据集:</label>
            <span class="select"><select id="dataset-sel"><option>研究 1/参数化解 1 (sol2)</option></select><svg><use href="#caret"/></svg></span>
            <button type="button" class="side" title="转到源"><svg><use href="#goto"/></svg></button>
          </div>
          <div class="row">
            <label for="param-sel">参数选择 (para):</label>
            <span class="select"><select id="param-sel"><option>来自列表</option></select><svg><use href="#caret"/></svg></span>
          </div>
          <div class="list-label" id="para-label">参数值 (para):</div>
          <div class="listbox">
            <ul role="listbox" aria-labelledby="para-label">
              <li role="option" aria-selected="true" class="picked">0.1</li>
              <li role="option">0.1122</li>
              <li role="option">0.12589</li>
              <li role="option">0.14125</li>
            </ul>
            <div class="scroll list-scroll"><svg><use href="#chev-up"/></svg><div class="track"><div class="thumb"></div></div><svg><use href="#chev-down"/></svg></div>
          </div>
          <div class="row">
            <label for="mode-sel">有效模式折射率 选择:</label>
            <span class="select"><select id="mode-sel"><option>全部</option></select><svg><use href="#caret"/></svg></span>
          </div>
          <div class="section section-y">
            <svg class="sec-caret"><use href="#caret"/></svg><h4>y 轴数据</h4>
            <button type="button" class="tool" title="添加表达式"><svg><use href="#plus"/></svg></button>
            <button type="button" class="drop" title="添加选项"><svg><use href="#caret"/></svg></button>
            <button type="button" class="tool" title="替换表达式"><svg><use href="#swap"/></svg></button>
            <button type="button" class="drop" title="替换选项"><svg><use href="#caret"/></svg></button>
          </div>
          <div class="expr-box">
            <table class="expr">
              <thead><tr><th><svg class="ff"><use href="#ff"/></svg><span>表达式</span></th><th>单位</th><th>描述</th></tr></thead>
              <tbody>
                <tr><td class="picked">intop1(ewfd.Poavz)</td><td>W</td><td>积分 1(芯层)</td></tr>
                <tr class="blank"><td></td><td></td><td></td></tr>
              </tbody>
            </table>
          </div>
          <div class="toolbar expr-tools">
            <button type="button" class="tool dim" title="上移"><svg><use href="#up"/></svg></button>
            <button type="button" class="tool dim" title="下移"><svg><use href="#down"/></svg></button>
            <button type="button" class="tool" title="删除"><svg><use href="#rows-x"/></svg></button>
            <button type="button" class="tool" title="清除"><svg><use href="#broom"/></svg></button>
            <button type="button" class="tool" title="加载"><svg><use href="#open"/></svg></button>
            <button type="button" class="tool" title="保存"><svg><use href="#save"/></svg></button>
            <button type="button" class="tool" title="编辑"><svg><use href="#edit"/></svg></button>
            <button type="button" class="drop" title="编辑选项"><svg><use href="#caret"/></svg></button>
          </div>
          <div class="field">
            <label for="expr-in">表达式:</label>
            <input id="expr-in" type="text" value="intop1(ewfd.Poavz)">
          </div>
          <div class="field">
            <label for="desc-in">描述:</label>
            <input id="desc-in" type="text" value="积分 1(芯层)">
          </div>
        </form>
        <div class="scroll form-scroll"><svg><use href="#chev-up"/></svg><div class="track"><div class="thumb"></div></div><svg><use href="#chev-down"/></svg></div>
      </div>
    </section>

    <div class="right">
      <section class="panel graphics">
        <div class="tabbar">
          <button class="tab tab-on">图形</button>
          <button class="tab">收敛图 1<svg><use href="#x"/></svg></button>
          <span class="panel-ctl"><svg class="ctl-caret"><use href="#caret"/></svg><svg class="ctl-pin"><use href="#pin"/></svg></span>
        </div>
        <div class="toolbar gfx-tools">
          <button class="tool" title="放大"><svg><use href="#zoomin"/></svg></button>
          <button class="tool" title="缩小"><svg><use href="#zoomout"/></svg></button>
          <button class="tool" title="框选缩放"><svg><use href="#zoombox"/></svg></button>
          <button class="tool" title="缩放到窗口大小"><svg><use href="#extents"/></svg></button>
          <span class="sep"></span>
          <button class="tool" title="x 轴对数"><svg><use href="#xlog"/></svg></button>
          <button class="tool" title="y 轴对数"><svg><use href="#ylog"/></svg></button>
          <button class="tool tool-on" title="显示图例"><svg><use href="#legend"/></svg></button>
          <span class="sep"></span>
          <button class="tool" title="快照"><svg><use href="#camera"/></svg></button>
          <button class="tool" title="打印"><svg><use href="#print"/></svg></button>
        </div>
        <svg class="plot" viewBox="0 0 843 529">
          <use href="#logo" x="808" y="6" width="28" height="26"/>
          <g class="gridlines"><path d="M235 57V483M381.500 57V483M528 57V483M674.500 57V483M821 57V483M89 470H835M89 436H835M89 403H835M89 369H835M89 336H835M89 302H835M89 269H835M89 235H835M89 202H835M89 168H835M89 134H835M89 101H835M89 67H835"/></g>
          <path class="axes" d="M88.500 57.500H834.500V483.500H88.500z"/>
          <path class="axes" d="M235.500 483v-7M381.500 483v-7M528.500 483v-7M674.500 483v-7M820.500 483v-7M235.500 57v7M381.500 57v7M528.500 57v7M674.500 57v7M820.500 57v7M89 470.500h7M89 436.500h7M89 403.500h7M89 369.500h7M89 336.500h7M89 302.500h7M89 269.500h7M89 235.500h7M89 202.500h7M89 168.500h7M89 134.500h7M89 101.500h7M89 67.500h7M834 470.500h-7M834 436.500h-7M834 403.500h-7M834 369.500h-7M834 336.500h-7M834 302.500h-7M834 269.500h-7M834 235.500h-7M834 202.500h-7M834 168.500h-7M834 134.500h-7M834 101.500h-7M834 67.500h-7"/>
          <polyline class="curve" points="103,469.500 382,469.500 396,350 411,338.500 425,337.500 440,120 455,469.500 704,469.500 718,72 733,70 748,469.500 821,469.500"/>
          <g class="ylab"><text x="83" y="475">0</text><text x="83" y="441">1</text><text x="83" y="408">2</text><text x="83" y="374">3</text><text x="83" y="341">4</text><text x="83" y="307">5</text><text x="83" y="274">6</text><text x="83" y="240">7</text><text x="83" y="207">8</text><text x="83" y="173">9</text><text x="83" y="139">10</text><text x="83" y="106">11</text></g>
          <g class="xlab"><text x="235" y="503">10</text><text x="381" y="503">20</text><text x="528" y="503">30</text><text x="675" y="503">40</text><text x="821" y="503">50</text><text class="caption" x="462" y="521">有效折射率编号</text><text class="caption" x="394" y="31">全局: 积分 1(芯层) (W)</text><text class="caption" transform="translate(15 270) rotate(-90)" x="0" y="0">芯层区域功率积分</text></g>
          <text x="23" y="69">×10<tspan class="sup" dy="-7">−8</tspan></text>
          <path d="M588 77h228v36H588z" fill="#808080"/>
          <path d="M591.500 73.500h227v35h-227z" fill="#fff" stroke="#000"/>
          <path class="curve" d="M600 90.500h34"/>
          <text x="640" y="96">para=0.1, 积分 1(芯层)</text>
        </svg>
      </section>

      <section class="panel results">
        <div class="tabbar">
          <button class="tab">消息<svg><use href="#x"/></svg></button>
          <button class="tab">进度</button>
          <button class="tab">日志</button>
          <button class="tab tab-on">Evaluation 2D<svg><use href="#x"/></svg></button>
          <span class="panel-ctl"><svg class="ctl-caret"><use href="#caret"/></svg><svg class="ctl-pin"><use href="#pin"/></svg></span>
        </div>
        <div class="toolbar res-tools">
          <button class="tool" title="设置"><svg><use href="#panel"/></svg></button>
          <span class="sep"></span>
          <button class="tool num">8.85<br>e-12</button>
          <button class="tool num tool-on auto">AUTO</button>
          <button class="tool num">8.5<br>e-1</button>
          <button class="tool num">850<br>e-3</button>
          <button class="tool num">0.85</button>
          <span class="sep"></span>
          <button class="tool tool-on" title="表格"><svg><use href="#gridfull"/></svg></button>
          <button class="tool" title="极坐标"><svg><use href="#polar"/></svg></button>
          <span class="sep"></span>
          <button class="tool" title="清除表格"><svg><use href="#broom"/></svg></button>
          <button class="tool" title="删除表格"><svg><use href="#trash"/></svg></button>
          <button class="tool" title="表图"><svg><use href="#tableplot"/></svg></button>
          <button class="tool" title="表面"><svg><use href="#square"/></svg></button>
          <button class="tool" title="复制"><svg><use href="#copytab"/></svg></button>
          <button class="tool" title="导出"><svg><use href="#exporttab"/></svg></button>
          <button class="tool" title="显示表格"><svg><use href="#grid"/></svg></button>
          <button class="drop" title="表格选项"><svg><use href="#caret"/></svg></button>
        </div>
        <div class="res-box">
          <table class="res">
            <thead><tr><th>x</th><th>y</th><th>Value</th><th class="rest"></th></tr></thead>
            <tbody><tr><td>-2.0979E-6</td><td>8.7518E-7</td><td>6.4540E-4</td><td class="rest"></td></tr></tbody>
          </table>
        </div>
      </section>
    </div>
  </main>

  <footer class="status">
    <span class="memory">1.77 GB | 2.18 GB</span>
    <span class="mark">CSDN @Leisureconfused</span>
  </footer>
</div>
</body>
</html>
```
FILE: styles.css
```css
* { box-sizing: border-box; }

body {
  margin: 0;
  height: 100vh;
  display: flex;
  flex-direction: column;
  overflow: hidden;
  border-top: 1px solid #a8a8a8;
  border-bottom: 1px solid #a8a8a8;
  background: #fff;
  color: #000;
  font: 15px/20px "Noto Sans", "Noto Sans CJK SC", sans-serif;
}

h1, h2, h3, h4, ul { margin: 0; padding: 0; font-weight: 400; }
ul { list-style: none; }
button, input, select { font: inherit; color: inherit; margin: 0; }
button { border: 0; padding: 0; background: none; white-space: nowrap; }
svg { display: block; flex: none; }
.defs { position: absolute; width: 0; height: 0; }

/* title bar */
.titlebar { height: 32px; flex: none; display: flex; align-items: center; padding-left: 9px; }
.app-logo { width: 22px; height: 22px; margin-right: 11px; }
.vline { width: 2px; height: 16px; background: #a8a8a8; margin-top: 6px; flex: none; }
.quick { display: flex; align-items: center; margin: 8px 5px 0 4px; }
.window-title { flex: 1; padding-left: 126px; text-align: center; font-size: 16px; line-height: 32px; white-space: nowrap; }
.window-buttons { display: flex; align-self: stretch; margin-right: 10px; }
.winbtn { width: 58px; display: grid; place-items: center; }
.winbtn svg { width: 12px; height: 12px; }
.winbtn-min { background: #e5e5e5; }

.tool { width: 29px; height: 22px; display: grid; place-items: center; flex: none; }
.tool svg { width: 20px; height: 20px; }
.quick .tool svg { width: 19px; height: 19px; }
.drop { width: 14px; height: 20px; display: grid; place-items: center; margin-right: 8px; color: #111; flex: none; }
.drop svg { width: 10px; height: 6px; }
.drop-small { margin-right: 0; width: 14px; }
.drop-small svg { width: 6px; height: 4px; }
.blue { color: #3c7fc0; }
.dim { color: #b0b0b0; }
.toolbar { display: flex; align-items: center; }
.sep { width: 20px; height: 20px; padding-left: 7px; }
.sep::before { content: ""; display: block; width: 1px; height: 20px; background: #c9ccd2; }

.frame { flex: 1; min-height: 0; display: flex; flex-direction: column; border: solid #a9a9a9; border-width: 0 4px; padding-top: 4px; }

/* ribbon */
.ribbon-tabs { height: 30px; flex: none; margin: 0 9px; display: flex; align-items: flex-start; background: #f9fbff; color: #2b579a; }
.file-btn { width: 70px; height: 29px; background: #2b579a; color: #fff; display: flex; align-items: center; justify-content: center; gap: 3px; outline: 1px solid #1f4680; outline-offset: -1px; }
.file-btn svg { width: 10px; height: 7px; }
.tabs-list { display: flex; gap: 1px; margin-right: 4px; }
.rtab { height: 30px; padding: 4px 16px 0; }
.rtab-active { height: 30px; margin-top: 1px; padding: 1px 13px 0; border: 1px solid #b4c7dd; border-bottom: 0; border-radius: 4px 4px 0 0; background: #fff; position: relative; }
.help { margin: 8px 6px 0 auto; width: 14px; height: 14px; background: #4c80ba; color: #fff; font-size: 11px; line-height: 14px; font-weight: 700; }
.ribbon { flex: none; margin: 0 9px; height: 114px; display: flex; border: 1px solid #b4c7dd; background: linear-gradient(#fff, #fcfcfe); }
.group { margin: 7px 0 9px; border-right: 1px solid #b9cadf; display: flex; flex-direction: column; }
.group-body { flex: 1; display: flex; }
.group-name { text-align: center; color: #999; line-height: 12px; }
.group-plot { padding: 0 8px 0 13px; gap: 6px; }
.group-add { padding: 0 11px 0 13px; }
.group-export { padding: 0 14px 0 13px; gap: 7px; }
.big { display: flex; flex-direction: column; align-items: center; min-width: 44px; padding-top: 3px; justify-content: flex-start; }
.group-plot .big + .big { min-width: 53px; }
.big > svg:first-child { margin-bottom: 6px; height: 30px; }
.big .more { width: 8px; height: 5px; margin-top: 4px; }
.ic-plotwin { width: 32px; }
.ic-plotin { width: 40px; }
.ic-wave { width: 36px; }
.ic-image { width: 38px; }
.ic-film { width: 38px; }
.cmds { display: grid; grid-template-columns: 61px 77px 57px; grid-auto-rows: 20px; gap: 8px 0; align-content: start; }
.cmd { display: flex; align-items: center; gap: 3px; height: 20px; }
.cmd svg { width: 18px; height: 18px; }
.cmd:disabled { color: #b0b0b0; }
.cmd-wide { grid-column: span 2; }
.group-attr { flex-direction: column; gap: 8px; padding: 0 11px 0 14px; }

/* workspace */
.workspace { flex: 1; min-height: 0; margin: 0 4px; padding: 5px; background: #f9fbff; display: grid; grid-template-columns: minmax(0, 414fr) minmax(0, 621fr) minmax(0, 845fr); grid-template-rows: minmax(0, 1fr); gap: 6px; }
.panel { border: 1px solid #d0d5dc; display: flex; flex-direction: column; min-height: 0; min-width: 0; overflow: hidden; }
.panel-head { height: 42px; flex: none; display: flex; justify-content: space-between; padding: 2px 5px 0 9px; }
.panel-head h2 { font-size: 27px; line-height: 40px; font-weight: 300; color: #2b579a; }
.panel-ctl { display: flex; gap: 9px; color: #ccd3dd; height: 13px; margin: 14px 0 0 auto; align-items: center; }
.ctl-caret { width: 10px; height: 6px; }
.ctl-pin { width: 9px; height: 13px; }
.builder-tools { height: 18px; flex: none; padding-left: 2px; }
.tree-box { flex: 1; min-height: 0; margin: 8px 6px 11px 5px; border: 1px solid #cfd2d8; background: #fff; display: flex; overflow: hidden; }
.tree { flex: 1; min-width: 0; }
.tree li { height: 22px; display: flex; align-items: center; white-space: pre; line-height: 22px; position: relative; }
.tree li svg { width: 20px; height: 20px; margin-right: 7px; }
.tree i { margin-left: 4px; }
.l1 { padding-left: 50px; }
.l2 { padding-left: 75px; }
.l3 { padding-left: 100px; }
.tree .step svg { margin-right: 15px; }
.selected { background: #dadadc; }
.open::before, .closed::before { content: ""; width: 9px; height: 8px; margin-left: -18px; margin-right: 9px; background: #222; clip-path: polygon(100% 0, 100% 100%, 0 100%); }
.closed::before { width: 7px; height: 12px; margin-left: -17px; margin-right: 10px; background: #8a8a8a; clip-path: polygon(0 0, 100% 50%, 0 100%, 0 0, 1px 2px, 1px 10px, 5px 50%, 1px 2px); }

.scroll { width: 21px; flex: none; background: #f0f0f0; display: flex; flex-direction: column; align-items: center; }
.scroll > svg { width: 10px; height: 6px; margin: 8px 0 7px; }
.track { flex: 1; width: 100%; }
.thumb { background: #cbcbcb; width: 100%; }
.tree-scroll .thumb { margin-top: 195px; height: 510px; }
.form-scroll .thumb { height: 484px; }
.list-scroll .thumb { height: 10px; }

/* settings */
.settings { border-color: #99cdf5; }
.settings h2 { color: #1e90ea; font-size: 26px; }
.settings .panel-ctl { color: #444; }
.node-type { font-size: 18px; line-height: 24px; padding-left: 8px; color: #1e90ea; font-weight: 300; height: 24px; }
.plot-cmd { height: 25px; margin-bottom: 5px; display: flex; align-items: center; gap: 6px; padding-left: 9px; flex: none; align-self: flex-start; }
.plot-cmd svg { width: 16px; height: 14px; }
.settings-view { flex: 1; min-height: 0; display: flex; overflow: hidden; padding-right: 1px; }
.settings-form { flex: 1; min-width: 0; padding-top: 12px; }
.row { display: flex; align-items: center; height: 26px; margin: 8px 7px 0 6px; }
.row label { width: 156px; flex: none; }
.label-row { height: 28px; margin-top: 0; }
.label-row label { width: 46px; }
.first-row { height: 28px; margin-top: 12px; }
.first-row + .row { margin-top: 8px; }
input[type="text"] { flex: 1; min-width: 0; height: 24px; border: 1px solid #d3d5d8; border-top-width: 2px; background: #fff; padding: 0 3px; outline: 0; }
.side { width: 25px; height: 28px; margin-left: 10px; border: 1px solid #9b9b9b; border-radius: 3px; background: #f2f2f2; display: grid; place-items: center; flex: none; outline: 1px solid #c4c4c4; outline-offset: -2px; }
.side svg { width: 18px; height: 20px; }
.select { flex: 1; height: 26px; position: relative; }
.select select { appearance: none; width: 100%; height: 26px; border: 1px solid #9d9d9d; border-bottom-width: 2px; border-radius: 3px; background: linear-gradient(#f2f2f2, #e5e5e5); padding: 0 24px 2px 13px; box-shadow: inset 0 0 0 1px #c8c8c8; }
.select svg { position: absolute; right: 5px; top: 11px; width: 8px; height: 6px; pointer-events: none; }
.section { height: 32px; margin-top: 11px; background: #dee8f4; display: flex; align-items: center; padding: 0 12px 0 7px; }
.section h4 { font-size: 17px; margin-right: auto; }
.sec-caret { width: 10px; height: 6px; margin-right: 15px; color: #444; }
.section-y { height: 34px; margin-top: 14px; }
.section-y .tool, .section-y .drop { margin-bottom: 3px; }
.section-y .tool svg { width: 18px; height: 18px; }
.section-y .drop:last-child { margin-right: 0; }
.list-label { margin-left: 6px; line-height: 36px; }
.listbox { height: 100px; margin: 0 7px 0 6px; border: 1px solid #d3d5d8; border-bottom-width: 3px; background: #fdfdff; display: flex; padding: 2px 2px 1px; overflow: hidden; }
.listbox ul { flex: 1; }
.listbox li { height: 23px; margin-bottom: 2px; padding-left: 5px; line-height: 23px; }
.picked { background: #dadadc; }
.expr-box { height: 250px; margin: 12px 7px 0 6px; border: 1px solid #d3d5d8; border-bottom-width: 3px; background: #fdfdff; }
table { border-collapse: separate; border-spacing: 0; table-layout: fixed; width: 100%; }
th { height: 34px; padding: 5px 5px 0; text-align: left; font-weight: 400; background: linear-gradient(#fff 40%, #f4f5f7 41%, #f0f1f3); border-right: 1px solid #e2e3e6; border-bottom: 1px solid #d0d0d0; position: relative; }
td { height: 23px; padding: 0 3px; border-right: 1px solid #a9a9a9; border-bottom: 1px solid #a9a9a9; background: #fff; white-space: nowrap; }
td.picked { background: #dadadc; }
.blank td { background: #fdfdff; }
.expr th:first-child { width: 55%; padding-left: 21px; }
.expr th:nth-child(2) { width: 75px; }
.ff { position: absolute; left: 5px; top: 4px; width: 11px; height: 8px; }
.expr-tools { height: 39px; padding-left: 8px; }
.field { margin: 0 7px 7px 6px; display: flex; flex-direction: column; }
.field label { line-height: 22px; margin-bottom: 6px; }
.field input[type="text"] { flex: none; }

/* right column */
.right { display: grid; grid-template-rows: minmax(0, 605fr) minmax(0, 234fr); gap: 6px; min-width: 0; }
.tabbar { height: 38px; flex: none; padding: 6px 5px 0; border-bottom: 1px solid #d0d5dc; display: flex; align-items: flex-start; gap: 10px; }
.tab { height: 31px; padding: 0 5px; background: #ebebeb; font-size: 17px; display: flex; align-items: center; gap: 10px; }
.tab svg { width: 12px; height: 12px; color: #ccd3dd; margin: 0 3px 2px 0; }
.tab-on { height: 32px; background: #f9fbff; border: 1px solid #d0d5dc; border-bottom: 0; color: #2b579a; }
.tabbar .panel-ctl { margin-top: 12px; }
.gfx-tools { height: 35px; flex: none; padding: 3px 0 0 2px; }
.gfx-tools .tool-on, .res-tools .tool-on { width: 23px; margin: 0 3px; border: 1px solid #2b579a; border-radius: 3px; background: linear-gradient(#7ba6d8, #d6e6f7); }
.plot { flex: 1; min-height: 0; width: 100%; background: #fff; font: 15px "DejaVu Sans", "Noto Sans CJK SC", sans-serif; }
.gridlines { stroke: #eeeeee; stroke-width: 2; }
.axes { fill: none; stroke: #000; }
.curve { fill: none; stroke: #2244ee; stroke-width: 1; }
.xlab { text-anchor: middle; }
.ylab { text-anchor: end; }
.caption { fill: #222; }
.sup { font-size: 11px; }
.res-tools { height: 39px; flex: none; padding: 0 0 2px 7px; }
.num { font: 700 8px/9px "DejaVu Sans", sans-serif; color: #4a7fb6; }
.auto { font-size: 7px; padding: 0; color: #2f639c; }
.res-box { flex: 1; min-height: 0; margin: 0 12px 9px 11px; border: 1px solid #d0d5dc; background: #fdfdff; }
.res th:first-child { width: 82px; }
.res th:nth-child(2), .res th:nth-child(3) { width: 75px; }
.res .rest { border-right: 0; }
.res td { padding: 0 1px; }

/* status bar */
.status { height: 40px; flex: none; background: #f0edec; display: flex; align-items: center; padding: 0 11px 0 1058px; justify-content: space-between; }
.mark { font-size: 19px; color: #9c9a9a; padding-top: 8px; white-space: nowrap; }
```
